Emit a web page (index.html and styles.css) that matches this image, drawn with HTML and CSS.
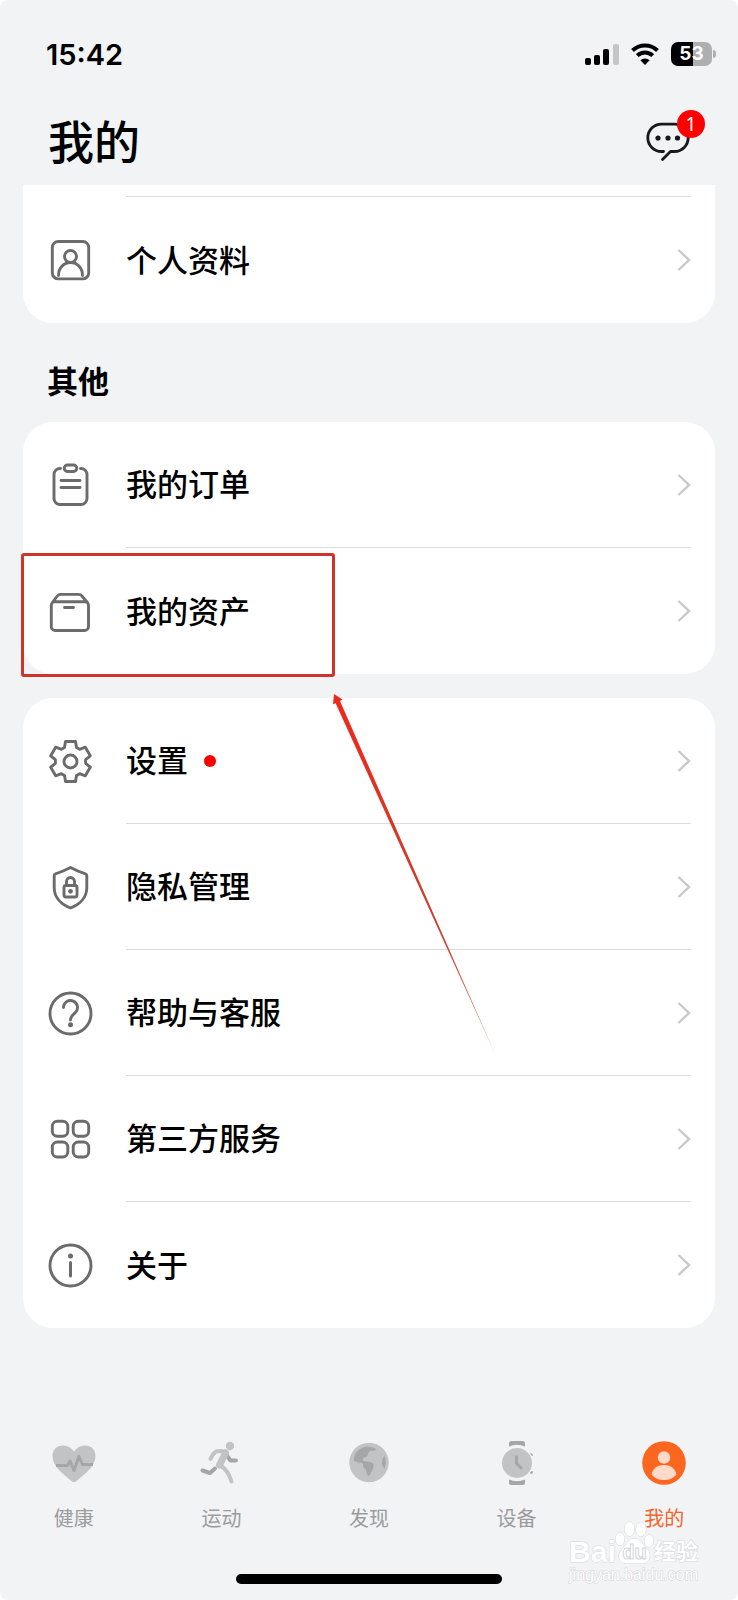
FILE: index.html
```
<!DOCTYPE html>
<html lang="zh-CN">

<head>
    <meta charset="UTF-8">
    <meta name="viewport" content="width=device-width, initial-scale=1.0">
    <title>我的</title>
    <link rel="stylesheet" href="styles.css">
</head>

<body>
    <div class="screen">
        <div class="status-bar">
            <span class="time">15:42</span>
            <div class="status-icons">
                <svg class="signal" width="34" height="22" viewBox="0 0 34 22">
                    <rect x="0" y="15" width="6" height="7" rx="2" />
                    <rect x="9" y="12" width="6" height="10" rx="2" />
                    <rect x="18" y="6" width="6" height="16" rx="2" />
                    <rect x="28" y="1" width="6" height="21" rx="2" fill="#c4c5c7" />
                </svg>
                <svg class="wifi" width="30" height="22" viewBox="0 0 30 22">
                    <path d="M2.500 7.500a18 18 0 0 1 25 0M7.300 12.600a11 11 0 0 1 15.400 0" fill="none" stroke="#000" stroke-width="4" />
                    <path d="M15 22l-4.600-4.800a7 7 0 0 1 9.200 0z" />
                </svg>
                <div class="battery"><span class="battery-level">53</span></div>
            </div>
        </div>

        <header>
            <h1>我的</h1>
            <button class="message-btn" aria-label="消息">
                <svg width="44" height="40" viewBox="0 0 44 40" fill="none" stroke="#17191c" stroke-width="2.8" stroke-linecap="round" stroke-linejoin="round">
                    <path d="M17.500 29.500H15.500a13.700 13.700 0 0 1 0-27.400H28.500a13.700 13.700 0 0 1 0 27.400H24.500L16.500 37.500" />
                    <g fill="#17191c" stroke="none">
                        <circle cx="12" cy="16" r="2.600" />
                        <circle cx="22" cy="16" r="2.600" />
                        <circle cx="31.500" cy="16" r="2.600" />
                    </g>
                </svg>
                <span class="badge">1</span>
            </button>
        </header>

        <main>
            <ul class="card card-cut">
                <li class="row">
                    <a href="#profile">
                        <svg class="icon" viewBox="0 0 48 48">
                            <rect x="6.300" y="5.500" width="36.400" height="37.400" rx="6" />
                            <circle cx="24.500" cy="20.500" r="6" />
                            <path d="M12.500 39.500c0-8 5.500-13 12-13s12 5 12 13" />
                        </svg>
                        <span class="row-body"><span class="label">个人资料</span><svg class="chevron" viewBox="0 0 14 24"><path d="M1.500 2l10.500 10-10.500 10" /></svg></span>
                    </a>
                </li>
            </ul>

            <h2>其他</h2>

            <ul class="card">
                <li class="row">
                    <a href="#orders">
                        <svg class="icon" viewBox="0 0 48 48">
                            <path d="M14.500 7.500h-.5a6 6 0 0 0-6 6v24a6 6 0 0 0 6 6h21a6 6 0 0 0 6-6v-24a6 6 0 0 0-6-6h-.5" />
                            <rect x="18.200" y="4" width="12.600" height="6.500" rx="3.200" />
                            <path d="M15 19.500h19M15 26.500h19" />
                        </svg>
                        <span class="row-body"><span class="label">我的订单</span><svg class="chevron" viewBox="0 0 14 24"><path d="M1.500 2l10.500 10-10.500 10" /></svg></span>
                    </a>
                </li>
                <li class="row">
                    <a href="#assets">
                        <svg class="icon" viewBox="0 0 48 48">
                            <path d="M5.300 19q0-2 1-3.300l5-6.700q1.200-1.600 3.300-1.600h18q2.100 0 3.300 1.600l5.600 6.700q1 1.300 1 3.300v20.500a4 4 0 0 1-4 4H9.300a4 4 0 0 1-4-4zM7.500 14.800H41M18.500 20.500h9" />
                        </svg>
                        <span class="row-body"><span class="label">我的资产</span><svg class="chevron" viewBox="0 0 14 24"><path d="M1.500 2l10.500 10-10.500 10" /></svg></span>
                    </a>
                    <div class="highlight"></div>
                </li>
            </ul>

            <ul class="card">
                <li class="row">
                    <a href="#settings">
                        <svg class="icon" viewBox="0 0 48 48">
                            <g transform="translate(24.500 24.500)">
                                <path d="M-6-14L-5-20H5L6-14L9.100-12.200L14.800-14.300L19.800-5.700L15.100-1.800V1.800L19.800 5.700L14.800 14.300L9.100 12.200L6 14L5 20H-5L-6 14L-9.100 12.200L-14.800 14.300L-19.800 5.700L-15.100 1.800V-1.800L-19.800-5.700L-14.800-14.300L-9.100-12.200Z" />
                                <circle r="6.500" />
                            </g>
                        </svg>
                        <span class="row-body"><span class="label">设置</span><i class="dot"></i><svg class="chevron" viewBox="0 0 14 24"><path d="M1.500 2l10.500 10-10.500 10" /></svg></span>
                    </a>
                </li>
                <li class="row">
                    <a href="#privacy">
                        <svg class="icon" viewBox="0 0 48 48">
                            <path d="M24.500 4.500q7.500 4 15 6.300 1.300.4 1.300 1.700v12c0 10-7 17-16.300 20.500-9.300-3.500-16.300-10.500-16.300-20.500v-12q0-1.300 1.300-1.700 7.500-2.300 15-6.300z" />
                            <rect x="18" y="22.500" width="13" height="11.500" rx="2" />
                            <path d="M20.500 22v-3.500a4 4 0 0 1 8 0V22" />
                            <circle class="solid" cx="24.500" cy="28.300" r="2.400" />
                        </svg>
                        <span class="row-body"><span class="label">隐私管理</span><svg class="chevron" viewBox="0 0 14 24"><path d="M1.500 2l10.500 10-10.500 10" /></svg></span>
                    </a>
                </li>
                <li class="row">
                    <a href="#help">
                        <svg class="icon" viewBox="0 0 48 48">
                            <circle cx="24.500" cy="24.500" r="20.500" />
                            <path d="M17.500 18.500a7 7 0 1 1 11.800 5.100c-2.600 2.300-4.800 3.900-4.800 7.400" />
                            <circle class="solid" cx="24.500" cy="35.800" r="2.500" />
                        </svg>
                        <span class="row-body"><span class="label">帮助与客服</span><svg class="chevron" viewBox="0 0 14 24"><path d="M1.500 2l10.500 10-10.500 10" /></svg></span>
                    </a>
                </li>
                <li class="row">
                    <a href="#services">
                        <svg class="icon" viewBox="0 0 48 48">
                            <rect x="6.300" y="6.300" width="15.500" height="15" rx="5" />
                            <rect x="27.200" y="6.300" width="15.500" height="15" rx="5" />
                            <rect x="6.300" y="27" width="15.500" height="15" rx="5" />
                            <rect x="27.200" y="27" width="15.500" height="15" rx="5" />
                        </svg>
                        <span class="row-body"><span class="label">第三方服务</span><svg class="chevron" viewBox="0 0 14 24"><path d="M1.500 2l10.500 10-10.500 10" /></svg></span>
                    </a>
                </li>
                <li class="row">
                    <a href="#about">
                        <svg class="icon" viewBox="0 0 48 48">
                            <circle cx="24.500" cy="24.500" r="20.500" />
                            <path d="M24.500 21.500v13.500" stroke-width="3" />
                            <circle class="solid" cx="24.500" cy="15" r="2.500" />
                        </svg>
                        <span class="row-body"><span class="label">关于</span><svg class="chevron" viewBox="0 0 14 24"><path d="M1.500 2l10.500 10-10.500 10" /></svg></span>
                    </a>
                </li>
                <!-- Arrow pointing at the highlighted row -->
                <svg class="arrow" width="164" height="364" viewBox="0 0 164 364">
                    <defs>
                        <linearGradient id="fade" x1="0" y1="0" x2="0" y2="1">
                            <stop offset="0" stop-color="#f0281c" />
                            <stop offset=".7" stop-color="#c8402f" />
                            <stop offset="1" stop-color="#c8402f" stop-opacity=".5" />
                        </linearGradient>
                    </defs>
                    <path d="M1 0L9.500 5.500L7 7L163 362L2.500 9L0 10.500Z" fill="url(#fade)" />
                </svg>
            </ul>
        </main>

        <nav class="tab-bar">
            <a class="tab" href="#health">
                <svg viewBox="0 0 44 44">
                    <path fill="#c2c3c5" d="M22 41q-1.500 0-3-1.300C10 32 .5 25 .5 15 .5 8.500 5 4.500 11 4.500c4.500 0 8.500 2 11 6 2.500-4 6.500-6 11-6 6 0 10.500 4 10.500 10.500 0 10-9.500 17-18.500 24.700Q23.500 41 22 41z" />
                    <path fill="none" stroke="#a5a6a8" stroke-width="3" stroke-linejoin="round" d="M4 24.500h11.500l2.500-4.500 4 9.500 5-14 3.500 8h10.500" />
                </svg>
                <span>健康</span>
            </a>
            <a class="tab" href="#sport">
                <svg viewBox="0 0 44 44" fill="none" stroke-linecap="round" stroke-linejoin="round">
                    <path stroke="#a5a6a8" stroke-width="4" d="M16 27.500l-5 4.500-7.500-2.500M26 12l5.500 7.500h5.500" />
                    <circle cx="31" cy="5" r="4.200" fill="#c2c3c5" />
                    <path stroke="#c2c3c5" stroke-width="4" d="M11.500 18c2-5 4-7.500 8-8l7 .5" />
                    <path stroke="#c2c3c5" stroke-width="7" d="M26.500 12l-6 12" />
                    <path stroke="#c2c3c5" stroke-width="4" d="M21 24c6 4 9 8 11.500 16.500" />
                </svg>
                <span>运动</span>
            </a>
            <a class="tab" href="#discover">
                <svg viewBox="0 0 44 44">
                    <circle cx="22" cy="21.500" r="19.700" fill="#c2c3c5" />
                    <path fill="#a5a6a8" d="M29 8.500c-1 2-5.500 0-7.500 3-1.500 2.500 0 4-4 5-3 .7-2 3-.5 3.500 3 .5 6 .5 8.500 2 2 1.500 1 6-1 8.500-1 2-1.500 4-3 4-2 0-1.500-4-3-6-2-2.500-3-3-2.500-5.500-1-2-7-1-9-3.500C6 15 11 7 18 6c4-.6 10 .5 11 2.500zM37.500 14.500q2.500 6 0 13.500-5-6 0-13.500z" />
                </svg>
                <span>发现</span>
            </a>
            <a class="tab" href="#device">
                <svg viewBox="0 0 44 44">
                    <path fill="#a5a6a8" d="M14 5.500V2.500Q14 0 16.500 0h11Q30 0 30 2.500v3q-8-3.500-16 0zM14 38.500q8 3.500 16 0v3Q30 44 27.500 44h-11Q14 44 14 41.500zM35 12.500q2-1 3 2l-1 .5zM35 31.500l1.500-1.500 1.500.5q0 2.500-2.500 2.500z" />
                    <circle cx="22" cy="22" r="15" fill="#c2c3c5" />
                    <path d="M21.500 14.500v8l5.500 5.500" fill="none" stroke="#a5a6a8" stroke-width="3" />
                </svg>
                <span>设备</span>
            </a>
            <a class="tab active" href="#me">
                <svg viewBox="0 0 44 44">
                    <circle cx="22" cy="22" r="21.800" fill="#fc661f" />
                    <circle cx="22" cy="16.500" r="6.200" fill="#ffdac8" />
                    <path d="M9.500 33.500C11 27 16 24 22 24s11 3 12.500 9.500Q30 39 22 39T9.500 33.500z" fill="#ffdac8" />
                </svg>
                <span>我的</span>
            </a>
        </nav>
        <div class="home-indicator"></div>

        <div class="watermark">
            <div class="watermark-logo">
                <span>Bai</span>
                <svg width="40" height="44" viewBox="0 0 40 44" fill="#fff" stroke="#d3d5d7">
                    <ellipse cx="5" cy="18" rx="4.500" ry="6.500" />
                    <ellipse cx="14.500" cy="8" rx="5" ry="7" />
                    <ellipse cx="26" cy="8.500" rx="5" ry="7" />
                    <ellipse cx="34" cy="20" rx="4.500" ry="6" />
                    <path d="M19.500 17.500c6 0 8 6 12 10 6 6 3 15-4 15h-16c-8 0-10-9-4-15 4-4 6-10 12-10z" />
                    <text x="19.500" y="38" text-anchor="middle">du</text>
                </svg>
                <span class="watermark-cn">经验</span>
            </div>
            <div class="watermark-url">jingyan.baidu.com</div>
        </div>
    </div>
</body>

</html>
```

FILE: styles.css
```
* {
    box-sizing: border-box;
}

body {
    margin: 0;
    background-color: #fff;
    font-family: "Noto Sans CJK SC", sans-serif;
    color: #000;
}

.screen {
    position: relative;
    display: flex;
    flex-direction: column;
    min-height: 100vh;
    padding-bottom: 16px;
    background-color: #f1f3f5;
    border-radius: 8px;
}

/* Status bar */
.status-bar {
    display: flex;
    justify-content: space-between;
    align-items: center;
    height: 108px;
    padding: 0 26px 0 46px;
}

.time {
    font-family: Inter, sans-serif;
    font-size: 29px;
    font-weight: 600;
}

.status-icons {
    display: flex;
    align-items: center;
    gap: 11px;
}

.battery {
    position: relative;
    width: 41px;
    height: 24px;
    border-radius: 7px;
    background: linear-gradient(to right, #000 53%, #aeafb1 53%);
    text-align: center;
}

.battery::after {
    content: "";
    position: absolute;
    left: 42px;
    top: 8px;
    width: 3px;
    height: 8px;
    border-radius: 0 3px 3px 0;
    background-color: #aeafb1;
}

.battery-level {
    display: block;
    font-family: Inter, sans-serif;
    font-size: 19px;
    font-weight: 700;
    line-height: 24px;
    color: #fff;
}

/* Header */
header {
    display: flex;
    justify-content: space-between;
    align-items: center;
    height: 77px;
    padding: 0 48px 10px 48px;
}

h1 {
    margin: 0;
    padding-bottom: 6px;
    font-size: 46px;
    font-weight: 500;
    line-height: 58px;
}

.message-btn {
    position: relative;
    display: flex;
    padding: 0;
    border: none;
    background: none;
    cursor: pointer;
}

.badge {
    position: absolute;
    top: -12px;
    right: -15px;
    width: 28px;
    height: 28px;
    border-radius: 50%;
    background-color: #fe0000;
    color: #fff;
    font-family: "Noto Sans", sans-serif;
    font-size: 19px;
    line-height: 28px;
    text-align: center;
}

/* Lists */
main {
    padding: 0 23px;
}

.card {
    position: relative;
    margin: 0 0 24px;
    padding: 0;
    list-style: none;
    background-color: #fff;
    border-radius: 30px;
}

.card-cut {
    border-radius: 0 0 30px 30px;
    margin-bottom: 0;
}

/* Divider of the row scrolled under the header */
.card-cut::before {
    content: "";
    display: block;
    height: 11px;
    margin: 0 24px 0 103px;
    border-bottom: 1px solid #dcdcdc;
}

h2 {
    margin: 0;
    padding: 14px 0 0 24px;
    font-size: 31px;
    font-weight: 700;
    line-height: 85px;
}

.row {
    position: relative;
}

.row a {
    display: flex;
    align-items: center;
    gap: 32px;
    height: 126px;
    padding: 0 24px 0 23px;
    color: inherit;
    text-decoration: none;
}

.icon {
    flex: none;
    width: 48px;
    height: 48px;
    fill: none;
    stroke: #6b6b6b;
    stroke-width: 2.9;
    stroke-linecap: round;
    stroke-linejoin: round;
}

.icon .solid {
    fill: #6b6b6b;
    stroke: none;
}

.row-body {
    display: flex;
    flex: 1;
    align-items: center;
    height: 100%;
    border-bottom: 1px solid #dcdcdc;
    font-size: 31px;
    font-weight: 500;
}

.row:last-of-type .row-body {
    border-bottom: none;
}

.label {
    padding-bottom: 4px;
}

.chevron {
    width: 14px;
    height: 24px;
    margin-left: auto;
    fill: none;
    stroke: #c8c8c8;
    stroke-width: 2.4;
}

.dot {
    width: 12px;
    height: 12px;
    margin-left: 16px;
    border-radius: 50%;
    background-color: #fe0000;
}

.highlight {
    position: absolute;
    top: 5px;
    left: -2px;
    width: 314px;
    height: 124px;
    border: 3px solid #d0332c;
    border-radius: 3px;
    pointer-events: none;
}

.arrow {
    position: absolute;
    top: -4px;
    left: 310px;
    pointer-events: none;
}

/* Bottom tabs */
.tab-bar {
    display: flex;
    margin-top: auto;
    padding-bottom: 41px;
}

.tab {
    display: flex;
    flex: 1;
    flex-direction: column;
    align-items: center;
    gap: 18px;
    color: #9b9c9e;
    font-size: 20px;
    line-height: 30px;
    text-decoration: none;
}

.tab svg {
    width: 44px;
    height: 44px;
}

.tab.active {
    color: #f4652a;
}

.home-indicator {
    width: 36%;
    height: 10px;
    margin: 0 auto;
    border-radius: 5px;
    background-color: #000;
}

/* Watermark */
.watermark {
    position: absolute;
    right: 40px;
    bottom: 15px;
    color: #fff;
    font-family: "Liberation Sans", "Noto Sans CJK SC", sans-serif;
    -webkit-text-stroke: 1px #d3d5d7;
    paint-order: stroke fill;
    pointer-events: none;
}

.watermark-logo {
    display: flex;
    align-items: flex-end;
    justify-content: space-between;
    font-size: 30px;
    font-weight: 700;
    line-height: 26px;
}

.watermark-logo svg {
    margin: 0 -2px;
}

.watermark-logo text {
    font-size: 20px;
    font-weight: 700;
    paint-order: normal;
}

.watermark-cn {
    font-size: 22px;
}

.watermark-url {
    font-size: 16px;
    line-height: 20px;
}
```
